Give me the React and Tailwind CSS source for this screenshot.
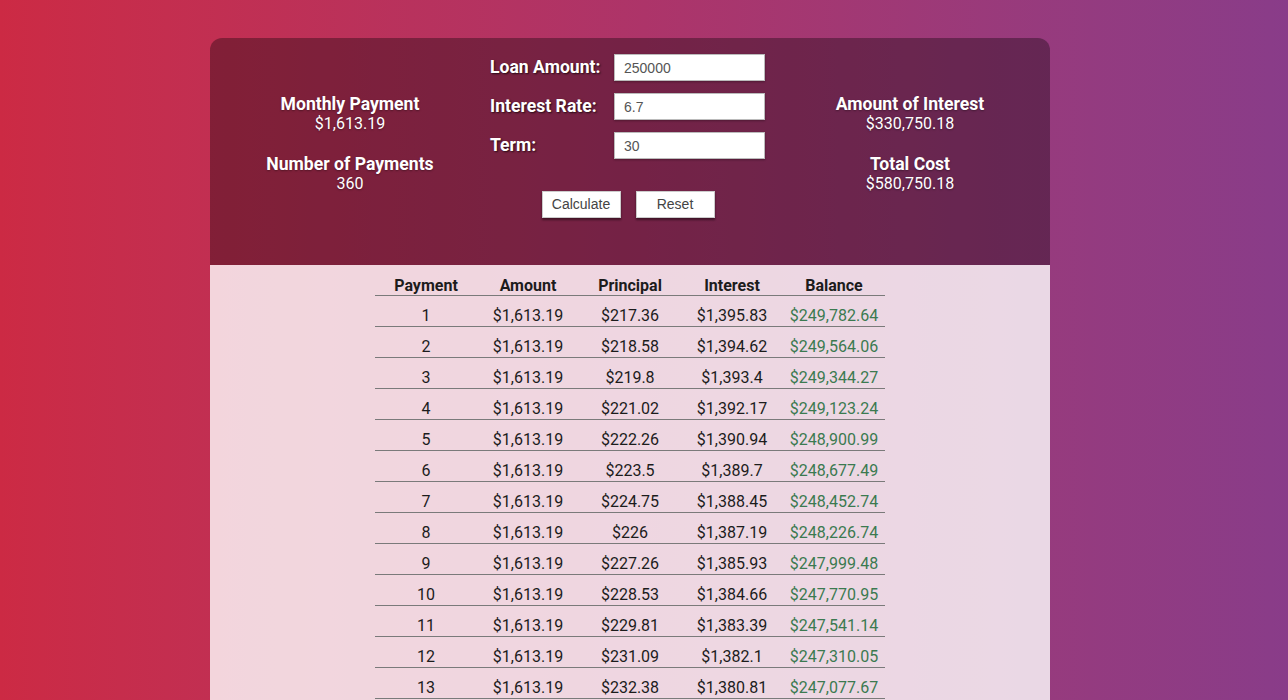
import { useState } from "react";

function buildSchedule(amount, rate, years) {
  const n = years * 12;
  const r = rate / 100 / 12;
  const payment = (amount * r) / (1 - Math.pow(1 + r, -n));
  const rows = [];
  let balance = amount;
  for (let i = 1; i <= n; i++) {
    const interest = balance * r;
    const principal = payment - interest;
    balance -= principal;
    rows.push({ i, payment, principal, interest, balance: Math.max(balance, 0) });
  }
  return { payment, n, rows };
}

const round2 = (v) => Math.round(v * 100) / 100;
const money = (v) => "$" + round2(v).toLocaleString("en-US");
const money2 = (v) =>
  "$" + v.toLocaleString("en-US", { minimumFractionDigits: 2, maximumFractionDigits: 2 });

function Stat({ title, value }) {
  return (
    <div className="text-center text-white [text-shadow:0_1px_2px_rgba(0,0,0,0.35)]">
      <div className="text-[17.6px] font-bold leading-5">{title}</div>
      <div className="text-[16px] leading-5">{value}</div>
    </div>
  );
}

function Field({ label, value, onChange }) {
  return (
    <div className="flex items-center">
      <label className="-mt-[2px] w-[124px] text-[17.6px] font-bold leading-5 text-white [text-shadow:1px_1px_2px_rgba(0,0,0,0.7)]">
        {label}
      </label>
      <input
        value={value}
        onChange={(e) => onChange(e.target.value)}
        className="h-[27px] w-[151px] border border-[#bbb] bg-white px-[9px] font-['Liberation_Sans',Arial,sans-serif] text-[14px] text-[#555] shadow-[0_1px_2px_rgba(0,0,0,0.3)] outline-none"
      />
    </div>
  );
}

export default function App() {
  const [amount, setAmount] = useState("250000");
  const [rate, setRate] = useState("6.7");
  const [term, setTerm] = useState("30");
  const [calc, setCalc] = useState({ amount: 250000, rate: 6.7, term: 30 });

  const { payment, n, rows } = buildSchedule(calc.amount, calc.rate, calc.term);
  const total = payment * n;
  const interestTotal = total - calc.amount;

  const handleCalc = () => {
    setCalc({ amount: Number(amount) || 0, rate: Number(rate) || 0, term: Number(term) || 0 });
  };

  const handleReset = () => {
    setAmount("250000");
    setRate("6.7");
    setTerm("30");
    setCalc({ amount: 250000, rate: 6.7, term: 30 });
  };

  const btn =
    "h-[27px] w-[79px] border border-[#ccc] bg-white font-['Liberation_Sans',Arial,sans-serif] text-[14px] text-[#444] shadow-[0_2px_2px_rgba(0,0,0,0.45)]";

  return (
    <div className="min-h-screen bg-gradient-to-r from-[#cc2a44] via-[#ad3469] to-[#893c89] pt-[38px] font-['Roboto',sans-serif]">
      <div className="ml-[210px] w-[840px] overflow-hidden rounded-t-xl">
        <div className="grid h-[227px] grid-cols-3 bg-black/[0.33]">
          <div className="flex flex-col items-center gap-5 pt-[56px]">
            <Stat title="Monthly Payment" value={money2(payment)} />
            <Stat title="Number of Payments" value={n} />
          </div>

          <div className="flex flex-col pt-4">
            <div className="flex flex-col gap-3">
              <Field label="Loan Amount:" value={amount} onChange={setAmount} />
              <Field label="Interest Rate:" value={rate} onChange={setRate} />
              <Field label="Term:" value={term} onChange={setTerm} />
            </div>
            <div className="mt-[32px] flex justify-center gap-[15px] pr-[4px]">
              <button className={btn} onClick={handleCalc}>Calculate</button>
              <button className={btn} onClick={handleReset}>Reset</button>
            </div>
          </div>

          <div className="flex flex-col items-center gap-5 pt-[56px]">
            <Stat title="Amount of Interest" value={money2(interestTotal)} />
            <Stat title="Total Cost" value={money2(total)} />
          </div>
        </div>

        <div className="bg-white/80">
          <table className="mx-auto w-[510px] table-fixed border-collapse text-[16px] text-[#1c1c1c]">
            <thead>
              <tr className="border-b border-[#7a7a7a]">
                {["Payment", "Amount", "Principal", "Interest", "Balance"].map((h) => (
                  <th key={h} className="pb-0 pt-[11px] text-center font-bold leading-[19px]">
                    {h}
                  </th>
                ))}
              </tr>
            </thead>
            <tbody>
              {rows.map((row) => (
                <tr key={row.i} className="border-b border-[#7a7a7a]">
                  <td className="pb-px pt-[10px] text-center leading-[19px]">{row.i}</td>
                  <td className="pb-px pt-[10px] text-center leading-[19px]">{money2(row.payment)}</td>
                  <td className="pb-px pt-[10px] text-center leading-[19px]">{money(row.principal)}</td>
                  <td className="pb-px pt-[10px] text-center leading-[19px]">{money(row.interest)}</td>
                  <td className="pb-px pt-[10px] text-center leading-[19px] text-[#3b7a50]">
                    {money2(row.balance)}
                  </td>
                </tr>
              ))}
            </tbody>
          </table>
        </div>
      </div>
    </div>
  );
}
